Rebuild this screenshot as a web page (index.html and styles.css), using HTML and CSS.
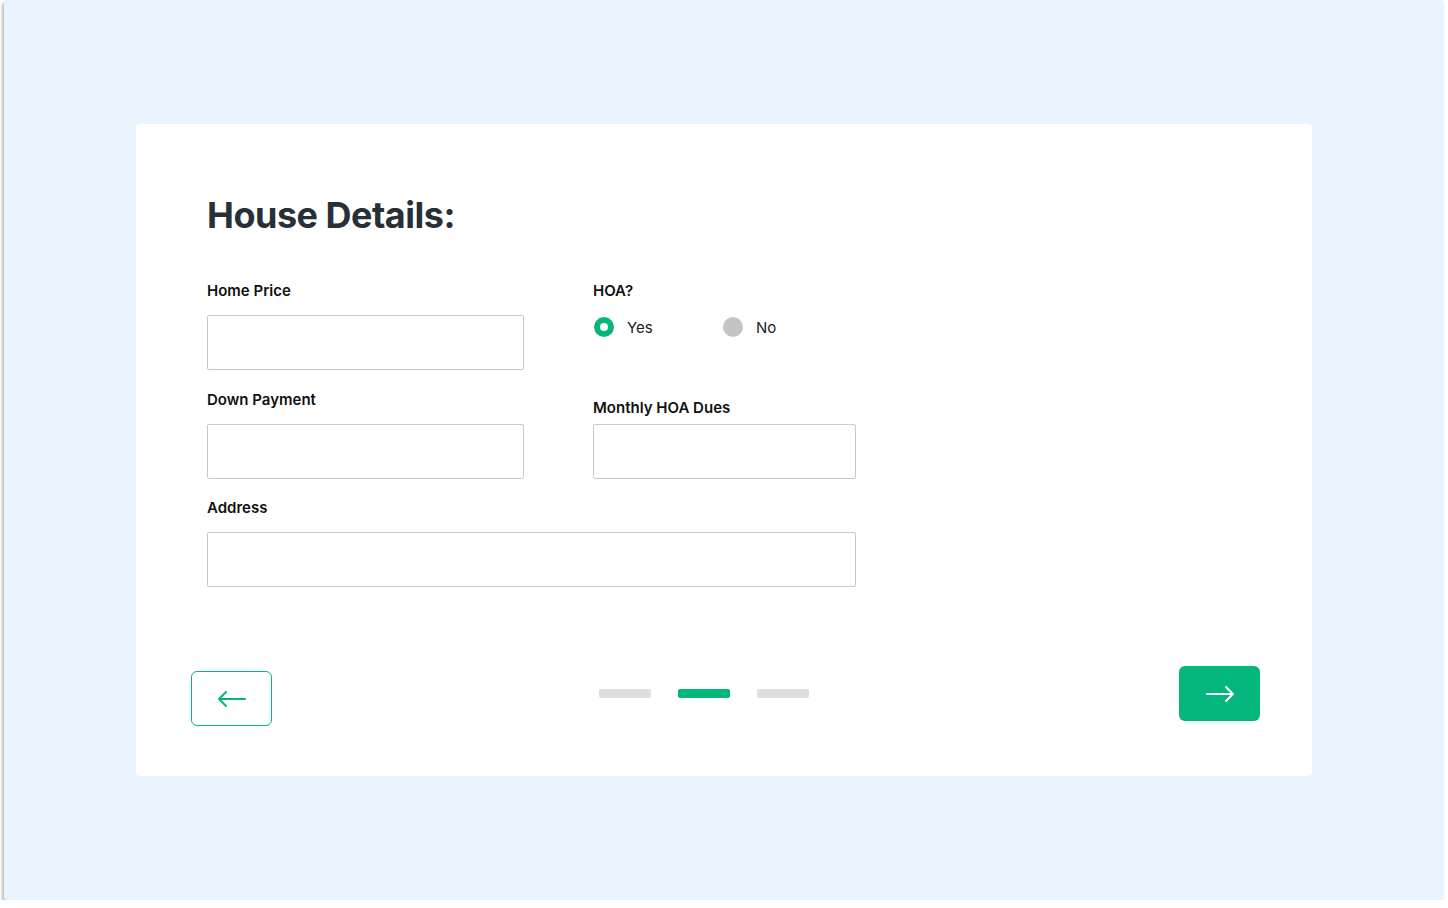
FILE: index.html
```html
<!DOCTYPE html>
<html lang="en">
<head>
    <meta charset="UTF-8">
    <meta name="viewport" content="width=device-width, initial-scale=1.0">
    <title>House Details</title>
    <link rel="stylesheet" href="styles.css">
</head>
<body>

<div class="frame">
    <div class="card">
        <h1 class="title">House Details:</h1>

        <div class="form">
            <div class="field">
                <label class="label">Home Price</label>
                <input class="input" type="text">
            </div>
            <div class="field field-hoa">
                <span class="label">HOA?</span>
                <div class="radios">
                    <div class="option option-yes">
                        <span class="radio radio-on"></span>
                        <span>Yes</span>
                    </div>
                    <div class="option">
                        <span class="radio"></span>
                        <span>No</span>
                    </div>
                </div>
            </div>

            <div class="field">
                <label class="label">Down Payment</label>
                <input class="input" type="text">
            </div>
            <div class="field field-dues">
                <label class="label">Monthly HOA Dues</label>
                <input class="input" type="text">
            </div>

            <div class="field field-wide">
                <label class="label">Address</label>
                <input class="input" type="text">
            </div>
        </div>

        <!-- Navigation -->
        <div class="nav">
            <button class="btn btn-back">
                <svg width="30" height="16" viewBox="0 0 30 16" fill="none" stroke="#03b77c" stroke-width="2" stroke-linecap="round" stroke-linejoin="round">
                    <path d="M28 8H2M9 1L2 8l7 7"/>
                </svg>
            </button>
            <div class="steps">
                <span class="step"></span>
                <span class="step step-on"></span>
                <span class="step"></span>
            </div>
            <button class="btn btn-next">
                <svg width="30" height="16" viewBox="0 0 30 16" fill="none" stroke="#fff" stroke-width="2" stroke-linecap="round" stroke-linejoin="round">
                    <path d="M2 8h26M21 1l7 7-7 7"/>
                </svg>
            </button>
        </div>
    </div>
</div>

</body>
</html>
```

FILE: styles.css
```css
body {
    margin: 0;
    background: #fff;
    font-family: Inter, "Noto Sans", sans-serif;
}

/* Fond bleu */
.frame {
    margin-left: 4px;
    width: 1440px;
    height: 900px;
    background: #eaf4fe;
    border-radius: 4px;
    box-shadow: -2px 2px 3px rgba(0, 0, 0, 0.25);
    padding-top: 124px;
    box-sizing: border-box;
}

.card {
    margin-left: 132px;
    width: 1176px;
    height: 652px;
    background: #fff;
    border-radius: 4px;
    padding: 69px 52px 0 71px;
    box-sizing: border-box;
}

.title {
    margin: 0 0 44px;
    font-size: 36px;
    line-height: 44px;
    font-weight: 700;
    letter-spacing: -0.5px;
    color: #272f38;
}

/* Formulaire */
.form {
    display: grid;
    grid-template-columns: 317px 263px;
    column-gap: 69px;
    row-gap: 20px;
}

.field {
    display: flex;
    flex-direction: column;
    gap: 14px;
}

.field-hoa {
    gap: 16px;
}

.field-dues {
    align-self: end;
    gap: 6px;
}

.field-wide {
    grid-column: 1 / 3;
    margin-top: -1px;
    gap: 14px;
}

.label {
    font-size: 15px;
    line-height: 20px;
    font-weight: 600;
    color: #111;
}

.input {
    height: 55px;
    margin: 0;
    border: 1px solid #c9c9c9;
    border-radius: 2px;
    box-sizing: border-box;
    background: #fff;
}

.radios {
    display: flex;
    margin-left: 1px;
    font-size: 15px;
    color: #222;
}

.option {
    display: flex;
    align-items: center;
    gap: 13px;
}

.option-yes {
    width: 129px;
}

.radio {
    width: 20px;
    height: 20px;
    border-radius: 50%;
    background: #c4c4c4;
    box-sizing: border-box;
}

.radio-on {
    background: #fff;
    border: 6px solid #03b77c;
}

/* Navigation */
.nav {
    display: flex;
    align-items: flex-start;
    margin: 79px 0 0 -16px;
}

.btn {
    width: 81px;
    height: 55px;
    border-radius: 6px;
    display: flex;
    justify-content: center;
    align-items: center;
    cursor: pointer;
    padding: 0;
}

.btn-back {
    margin-top: 5px;
    width: 81px;
    background: #fff;
    border: 1px solid #03b77c;
}

.btn-next {
    margin-left: auto;
    background: #03b77c;
    border: none;
}

.steps {
    display: flex;
    gap: 27px;
    margin: 23px 0 0 327px;
}

.step {
    width: 52px;
    height: 9px;
    border-radius: 2px;
    background: #dedede;
}

.step-on {
    background: #03b77c;
}
```
